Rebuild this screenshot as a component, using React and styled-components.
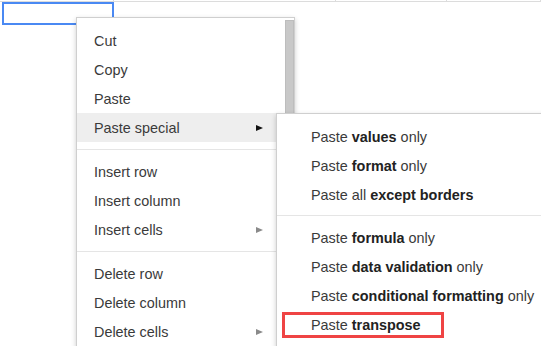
import React from "react";
import styled, { createGlobalStyle } from "styled-components";

const GlobalStyle = createGlobalStyle`
  body {
    margin: 0;
    overflow: hidden;
    background: #fff;
    font-family: "Liberation Sans", Arial, sans-serif;
  }
`;

const Sheet = styled.div`
  position: relative;
  width: 541px;
  height: 346px;
  overflow: hidden;
  background: #fff;
`;

const GridRow = styled.div`
  display: flex;
  height: 1px;
  border-bottom: 1px solid #dcdcdc;
`;

const GridCell = styled.div`
  box-sizing: border-box;
  width: ${({ w }) => (w ? `${w}px` : "auto")};
  flex: ${({ w }) => (w ? "none" : "1")};
  border-right: 1px solid #dcdcdc;
`;

const SelectedCell = styled.div`
  position: absolute;
  left: 2px;
  top: 2px;
  width: 112px;
  height: 23px;
  box-sizing: border-box;
  border: 2px solid #4a89f3;
`;

const Menu = styled.div`
  position: absolute;
  left: ${({ x }) => x}px;
  top: ${({ y }) => y}px;
  width: ${({ w }) => w}px;
  box-sizing: border-box;
  padding: 8px 0;
  background: #fff;
  border: 1px solid #cfcfcf;
  box-shadow: 0 2px 5px rgba(0, 0, 0, 0.2);
`;

const ScrollThumb = styled.div`
  position: absolute;
  right: 0;
  top: 2px;
  width: 9px;
  height: 160px;
  background: #c8c8c8;
  border: 1px solid #bdbdbd;
  box-sizing: border-box;
`;

const Item = styled.div`
  position: relative;
  display: flex;
  align-items: center;
  justify-content: space-between;
  height: 29px;
  margin-right: ${({ sub }) => (sub ? "0" : "10px")};
  padding: 0 21px 0 ${({ sub }) => (sub ? "34px" : "17px")};
  font-size: 14.4px;
  color: #3a3a3a;
  white-space: nowrap;
  background: ${({ active }) => (active ? "#eeeeee" : "transparent")};

  b {
    font-weight: 700;
    color: #222;
  }

  &::after {
    content: "";
    display: ${({ marked }) => (marked ? "block" : "none")};
    position: absolute;
    left: 5px;
    top: 2px;
    width: 162px;
    height: 26px;
    box-sizing: border-box;
    border: 3px solid #ef4444;
  }
`;

const Arrow = styled.span`
  width: 0;
  height: 0;
  border-left: 7px solid ${({ dark }) => (dark ? "#111" : "#8a8a8a")};
  border-top: 3.5px solid transparent;
  border-bottom: 3.5px solid transparent;
`;

const Separator = styled.div`
  height: 1px;
  margin: ${({ sub }) => (sub ? "6px 0 7px" : "7px 0")};
  background: #e5e5e5;
`;

const mainItems = [
  { label: "Cut" },
  { label: "Copy" },
  { label: "Paste" },
  { label: "Paste special", arrow: true, active: true },
  "sep",
  { label: "Insert row" },
  { label: "Insert column" },
  { label: "Insert cells", arrow: true },
  "sep",
  { label: "Delete row" },
  { label: "Delete column" },
  { label: "Delete cells", arrow: true },
];

const subItems = [
  ["values", " only"],
  ["format", " only"],
  ["except borders", "", "all "],
  "sep",
  ["formula", " only"],
  ["data validation", " only"],
  ["conditional formatting", " only"],
  ["transpose", "", "", true],
];

export default function App() {
  return (
    <Sheet>
      <GlobalStyle />
      <GridRow>
        <GridCell w={114} />
        <GridCell w={222} />
        <GridCell w={111} />
        <GridCell />
      </GridRow>
      <SelectedCell />

      <Menu x={76} y={17} w={219}>
        <ScrollThumb />
        {mainItems.map((it, i) =>
          it === "sep" ? (
            <Separator key={i} />
          ) : (
            <Item key={i} active={it.active}>
              <span>{it.label}</span>
              {it.arrow && <Arrow dark={it.active} />}
            </Item>
          )
        )}
      </Menu>

      <Menu x={276} y={113} w={300}>
        {subItems.map((it, i) =>
          it === "sep" ? (
            <Separator key={i} sub />
          ) : (
            <Item key={i} sub marked={it[3]}>
              <span>
                Paste {it[2]}
                <b>{it[0]}</b>
                {it[1]}
              </span>
            </Item>
          )
        )}
      </Menu>
    </Sheet>
  );
}
